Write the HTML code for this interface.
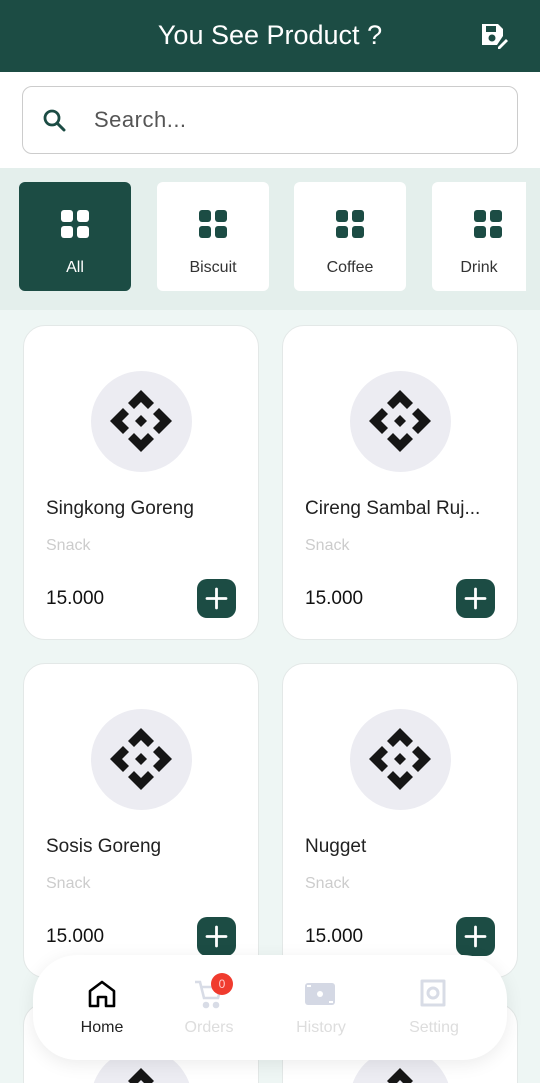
<!DOCTYPE html>
<html style="width:540px;height:1083px;overflow:hidden"><head><meta charset="utf-8"><style>
*{box-sizing:border-box;margin:0;padding:0}
body{width:540px;height:1083px;overflow:hidden;background:#eef6f4;font-family:"Liberation Sans",sans-serif;position:relative}
.hdr{position:absolute;left:0;top:0;width:540px;height:72px;background:#1c4c44;color:#fff;font-size:27px;text-align:center;line-height:70px}
.sw{position:absolute;top:72px;left:0;width:540px;height:96px;background:#fff}
.search{position:absolute;left:22px;top:14px;width:496px;height:68px;border:1.5px solid #ccc;border-radius:10px}
.search span{position:absolute;left:71px;top:20px;font-size:22px;color:#555;letter-spacing:.5px}
.cats{position:absolute;top:168px;left:0;width:540px;height:142px;background:#e4efec}
.tile{position:absolute;top:14px;width:112px;height:109px;background:#fff;border-radius:6px;text-align:center;font-size:16px;color:#333}
.tile.on{background:#1c4c44;color:#fff}
.tile svg{position:absolute;left:42px;top:28px}
.tile div{position:absolute;top:77px;width:100%}
.card{position:absolute;width:236px;height:315px;background:#fff;border:1px solid #e3e8e7;border-radius:22px}
.circ{position:absolute;left:67px;top:45px;width:101px;height:101px;border-radius:50%;background:#ececf2}
.circ svg{position:absolute;left:18px;top:18px}
.nm{position:absolute;left:22px;top:172px;font-size:19px;color:#222;white-space:nowrap}
.cat{position:absolute;left:22px;top:211px;font-size:16px;color:#ccc}
.pr{position:absolute;left:22px;top:262px;font-size:19px;color:#111}
.add{position:absolute;left:173px;top:253px;width:39px;height:39px;border-radius:10px;background:#1c4c44}
.nav{position:absolute;left:33px;top:955px;width:474px;height:105px;background:#fff;border-radius:44px;box-shadow:0 4px 18px rgba(0,0,0,.08)}
.ni{position:absolute;top:64px;font-size:16px;color:#ddd;text-align:center;width:100px}
</style></head><body>
<div class="hdr">You See Product ?
<svg style="position:absolute;left:479px;top:20px" width="30" height="30" viewBox="0 0 30 30"><path d="M3 4h16l5 5v7l-6 9H3z" fill="#fff"/><rect x="7" y="6" width="10" height="6" fill="#1c4c44"/><circle cx="13" cy="18" r="3.5" fill="#1c4c44"/><path d="M19 27l8-8 2 2-8 8h-2z" fill="#fff"/></svg></div>
<div class="sw"><div class="search"><svg style="position:absolute;left:19px;top:21px" width="26" height="26" viewBox="0 0 26 26"><circle cx="10" cy="10" r="7" fill="none" stroke="#1c4c44" stroke-width="2.8"/><path d="M15 15l7 7" stroke="#1c4c44" stroke-width="3" stroke-linecap="round"/></svg><span>Search...</span></div></div>
<div class="cats">
<div class="tile on" style="left:19px"><svg width="28" height="28"><rect x="0" y="0" width="12" height="12" rx="3" fill="#fff"/><rect x="16" y="0" width="12" height="12" rx="3" fill="#fff"/><rect x="0" y="16" width="12" height="12" rx="3" fill="#fff"/><rect x="16" y="16" width="12" height="12" rx="3" fill="#fff"/></svg><div>All</div></div>
<div class="tile" style="left:157px"><svg width="28" height="28"><g fill="#1c4c44"><rect x="0" y="0" width="12" height="12" rx="3"/><rect x="16" y="0" width="12" height="12" rx="3"/><rect x="0" y="16" width="12" height="12" rx="3"/><rect x="16" y="16" width="12" height="12" rx="3"/></g></svg><div>Biscuit</div></div>
<div class="tile" style="left:294px"><svg width="28" height="28"><g fill="#1c4c44"><rect x="0" y="0" width="12" height="12" rx="3"/><rect x="16" y="0" width="12" height="12" rx="3"/><rect x="0" y="16" width="12" height="12" rx="3"/><rect x="16" y="16" width="12" height="12" rx="3"/></g></svg><div>Coffee</div></div>
<div class="tile" style="left:432px;width:94px;border-radius:6px 0 0 6px"><svg width="28" height="28"><g fill="#1c4c44"><rect x="0" y="0" width="12" height="12" rx="3"/><rect x="16" y="0" width="12" height="12" rx="3"/><rect x="0" y="16" width="12" height="12" rx="3"/><rect x="16" y="16" width="12" height="12" rx="3"/></g></svg><div>Drink</div></div>
</div>
<svg width="0" height="0" style="position:absolute"><defs><g id="lg" fill="#161616" transform="translate(32,32)"><polygon points="0,-31 13,-18 7,-12 0,-19 -7,-12 -13,-18"/><polygon points="0,31 13,18 7,12 0,19 -7,12 -13,18"/><polygon points="-31,0 -18,-13 -12,-7 -19,0 -12,7 -18,13"/><polygon points="31,0 18,-13 12,-7 19,0 12,7 18,13"/><polygon points="0,-6 6,0 0,6 -6,0"/></g><g id="pl"><path d="M19.5 10v19M10 19.5h19" stroke="#fff" stroke-width="2.8" stroke-linecap="round"/></g></defs></svg>
<div class="card" style="left:23px;top:325px"><div class="circ"><svg width="64" height="64"><use href="#lg"/></svg></div><div class="nm">Singkong Goreng</div><div class="cat">Snack</div><div class="pr">15.000</div><svg class="add" viewBox="0 0 39 39"><use href="#pl"/></svg></div>
<div class="card" style="left:282px;top:325px"><div class="circ"><svg width="64" height="64"><use href="#lg"/></svg></div><div class="nm">Cireng Sambal Ruj...</div><div class="cat">Snack</div><div class="pr">15.000</div><svg class="add" viewBox="0 0 39 39"><use href="#pl"/></svg></div>
<div class="card" style="left:23px;top:663px"><div class="circ"><svg width="64" height="64"><use href="#lg"/></svg></div><div class="nm">Sosis Goreng</div><div class="cat">Snack</div><div class="pr">15.000</div><svg class="add" viewBox="0 0 39 39"><use href="#pl"/></svg></div>
<div class="card" style="left:282px;top:663px"><div class="circ"><svg width="64" height="64"><use href="#lg"/></svg></div><div class="nm">Nugget</div><div class="cat">Snack</div><div class="pr">15.000</div><svg class="add" viewBox="0 0 39 39"><use href="#pl"/></svg></div>
<div class="card" style="left:23px;top:1003px;height:80px;border-bottom:none;border-radius:22px 22px 0 0;overflow:hidden"><div class="circ"><svg width="64" height="64"><use href="#lg"/></svg></div></div>
<div class="card" style="left:282px;top:1003px;height:80px;border-bottom:none;border-radius:22px 22px 0 0;overflow:hidden"><div class="circ"><svg width="64" height="64"><use href="#lg"/></svg></div></div>
<div class="nav">
<svg style="position:absolute;left:54px;top:24px" width="30" height="30" viewBox="0 0 30 30"><path d="M3 27V12L15 3l12 9v15h-8v-9h-8v9z" fill="none" stroke="#000" stroke-width="2.6" stroke-linejoin="round"/></svg>
<div class="ni" style="left:19px;color:#222">Home</div>
<svg style="position:absolute;left:160px;top:24px" width="32" height="32" viewBox="0 0 32 32" fill="none" stroke="#d8dce6" stroke-width="2.6"><path d="M2 3h5l4 16h14l3-11H9"/><circle cx="13" cy="26" r="2" fill="#d8dce6"/><circle cx="23" cy="26" r="2" fill="#d8dce6"/></svg>
<div style="position:absolute;left:178px;top:18px;width:22px;height:22px;border-radius:50%;background:#f03b2e;color:#fcc;font-size:12px;text-align:center;line-height:22px">0</div>
<div class="ni" style="left:126px">Orders</div>
<svg style="position:absolute;left:272px;top:28px" width="30" height="22" viewBox="0 0 30 22"><rect x="0" y="0" width="30" height="22" rx="3" fill="#d4d8e4"/><circle cx="15" cy="11" r="3" fill="#fff"/><path d="M2 3h4M24 19h4" stroke="#fff" stroke-width="2"/></svg>
<div class="ni" style="left:238px">History</div>
<svg style="position:absolute;left:385px;top:22px" width="30" height="32" viewBox="0 0 30 32"><path d="M4 4h22v24H4z" fill="none" stroke="#d8dce6" stroke-width="3" stroke-linejoin="round"/><circle cx="15" cy="16" r="5" fill="none" stroke="#d8dce6" stroke-width="3"/></svg>
<div class="ni" style="left:351px">Setting</div>
</div>
</body></html>
